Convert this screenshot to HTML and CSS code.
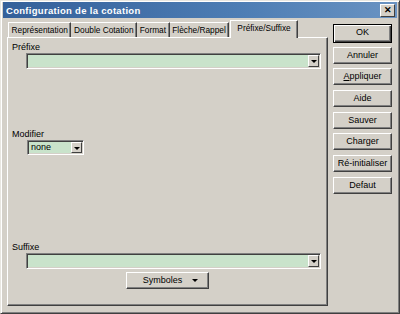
FILE: index.html
```html
<!doctype html>
<html>
<head>
    <meta charset="utf-8">
    <title>Configuration de la cotation</title>
    <link rel="stylesheet" href="styles.css">
</head>
<body>
    <div class="window">
        <div class="titlebar">
            <span class="title">Configuration de la cotation</span>
            <span class="close">&#x2715;</span>
        </div>
        <div class="main">
            <div class="tabsCol">
                <ul class="tabstrip">
                    <li class="tab first">Représentation</li>
                    <li class="tab">Double Cotation</li>
                    <li class="tab">Format</li>
                    <li class="tab">Flèche/Rappel</li>
                    <li class="tab active">Préfixe/Suffixe</li>
                </ul>
                <div class="panel">
                    <div class="label lblPrefix">Préfixe</div>
                    <div class="combo wide"><span class="arrow"></span></div>

                    <div class="label lblModif">Modifier</div>
                    <div class="combo small"><span class="val">none</span><span class="arrow"></span></div>

                    <div class="label lblSuffix">Suffixe</div>
                    <div class="combo wide"><span class="arrow"></span></div>

                    <div class="symRow">
                        <div class="btn sym">Symboles <span class="tri"></span></div>
                    </div>
                </div>
            </div>
            <div class="btnCol">
                <div class="btn def">OK</div>
                <div class="btn">Annuler</div>
                <div class="btn"><u>A</u>ppliquer</div>
                <div class="btn">Aide</div>
                <div class="btn">Sauver</div>
                <div class="btn">Charger</div>
                <div class="btn">Ré-initialiser</div>
                <div class="btn">Defaut</div>
            </div>
        </div>
    </div>
</body>
</html>
```
FILE: styles.css
```css
body,
ul {
    margin: 0px;
    padding: 0px;
}
body {
    background: #d4d0c8;
    font-family: "Liberation Sans", Arial, sans-serif;
    font-size: 9px;
    color: #000;
}
li {
    list-style: none;
}
.window {
    width: 400px;
    height: 314px;
    box-sizing: border-box;
    background: #d4d0c8;
    border: 1px solid;
    border-color: #e8e6e0 #404040 #404040 #e8e6e0;
    box-shadow: inset 1px 1px 0 #fff, inset -1px -1px 0 #808080;
    padding: 1px 2px;
}
.titlebar {
    height: 16px;
    display: flex;
    align-items: center;
    justify-content: space-between;
    padding: 0 2px 0 3px;
    background: linear-gradient(to right, #34609a, #4d7db4 60%, #6a93c2);
}
.title {
    color: #fff;
    font-weight: bold;
    font-size: 9.5px;
    letter-spacing: 0.3px;
}
.close {
    width: 13px;
    height: 11px;
    line-height: 11px;
    text-align: center;
    background: #d4d0c8;
    font-size: 9px;
    font-weight: bold;
    border: 1px solid;
    border-color: #fff #404040 #404040 #fff;
}
.main {
    display: flex;
    padding: 2px 0 0 4px;
}
.tabsCol {
    width: 321px;
}
.tabstrip {
    display: flex;
    align-items: flex-end;
    height: 17px;
    padding-left: 1px;
    position: relative;
    z-index: 1;
    font-size: 8.3px;
}
.tab {
    height: 14px;
    line-height: 14px;
    padding: 0 2.6px;
    border-top: 1px solid #fff;
    border-right: 1px solid #404040;
    box-shadow: inset -1px 0 0 #808080;
}
.tab.first {
    border-left: 1px solid #fff;
}
.tab.active {
    height: 17px;
    line-height: 15px;
    padding: 0 6px;
    margin-left: 1px;
    margin-bottom: -1px;
    border-left: 1px solid #fff;
    background: #d4d0c8;
}
.panel {
    height: 269px;
    box-sizing: border-box;
    border: 1px solid;
    border-color: #fff #404040 #404040 #fff;
    box-shadow: inset -1px -1px 0 #808080;
    display: flex;
    flex-direction: column;
    padding: 4px 0 0 4px;
}
.label {
    height: 10px;
    line-height: 10px;
}
.lblModif {
    margin-top: 60px;
}
.lblSuffix {
    margin-top: 87px;
}
.combo {
    position: relative;
    box-sizing: border-box;
    height: 16px;
    margin: 1px 0 0 14px;
    background: #c9e3cb;
    border: 1px solid;
    border-color: #808080 #fff #fff #808080;
    box-shadow: inset 1px 1px 0 #404040, inset -1px -1px 0 #d4d0c8;
}
.combo.wide {
    width: 295px;
}
.combo.small {
    width: 57px;
    height: 15px;
    margin-left: 15px;
}
.val {
    display: block;
    padding-left: 3px;
    line-height: 13px;
}
.arrow {
    position: absolute;
    right: 1px;
    top: 1px;
    bottom: 1px;
    width: 11px;
    box-sizing: border-box;
    background: #d4d0c8;
    border: 1px solid;
    border-color: #fff #404040 #404040 #fff;
}
.arrow:after {
    content: "";
    position: absolute;
    left: 2px;
    top: 4px;
    border-left: 3px solid transparent;
    border-right: 3px solid transparent;
    border-top: 3px solid #000;
}
.symRow {
    display: flex;
    justify-content: center;
    margin: 3px 0 0 -4px;
}
.btn {
    box-sizing: border-box;
    height: 17px;
    line-height: 15px;
    text-align: center;
    background: #d4d0c8;
    border: 1px solid;
    border-color: #fff #404040 #404040 #fff;
    box-shadow: inset -1px -1px 0 #808080;
}
.btn.sym {
    width: 83px;
    position: relative;
    padding-right: 10px;
}
.tri {
    position: absolute;
    right: 10px;
    top: 6px;
    border-left: 3px solid transparent;
    border-right: 3px solid transparent;
    border-top: 3px solid #000;
}
.btnCol {
    display: flex;
    flex-direction: column;
    gap: 4.7px;
    width: 59px;
    margin: 5px 0 0 5px;
}
.btn.def {
    height: 19px;
    line-height: 15px;
    border: 1px solid #000;
    box-shadow: inset 1px 1px 0 #fff, inset -1px -1px 0 #404040, inset -2px -2px 0 #808080;
    margin-bottom: -1px;
    margin-top: -1px;
}
```
